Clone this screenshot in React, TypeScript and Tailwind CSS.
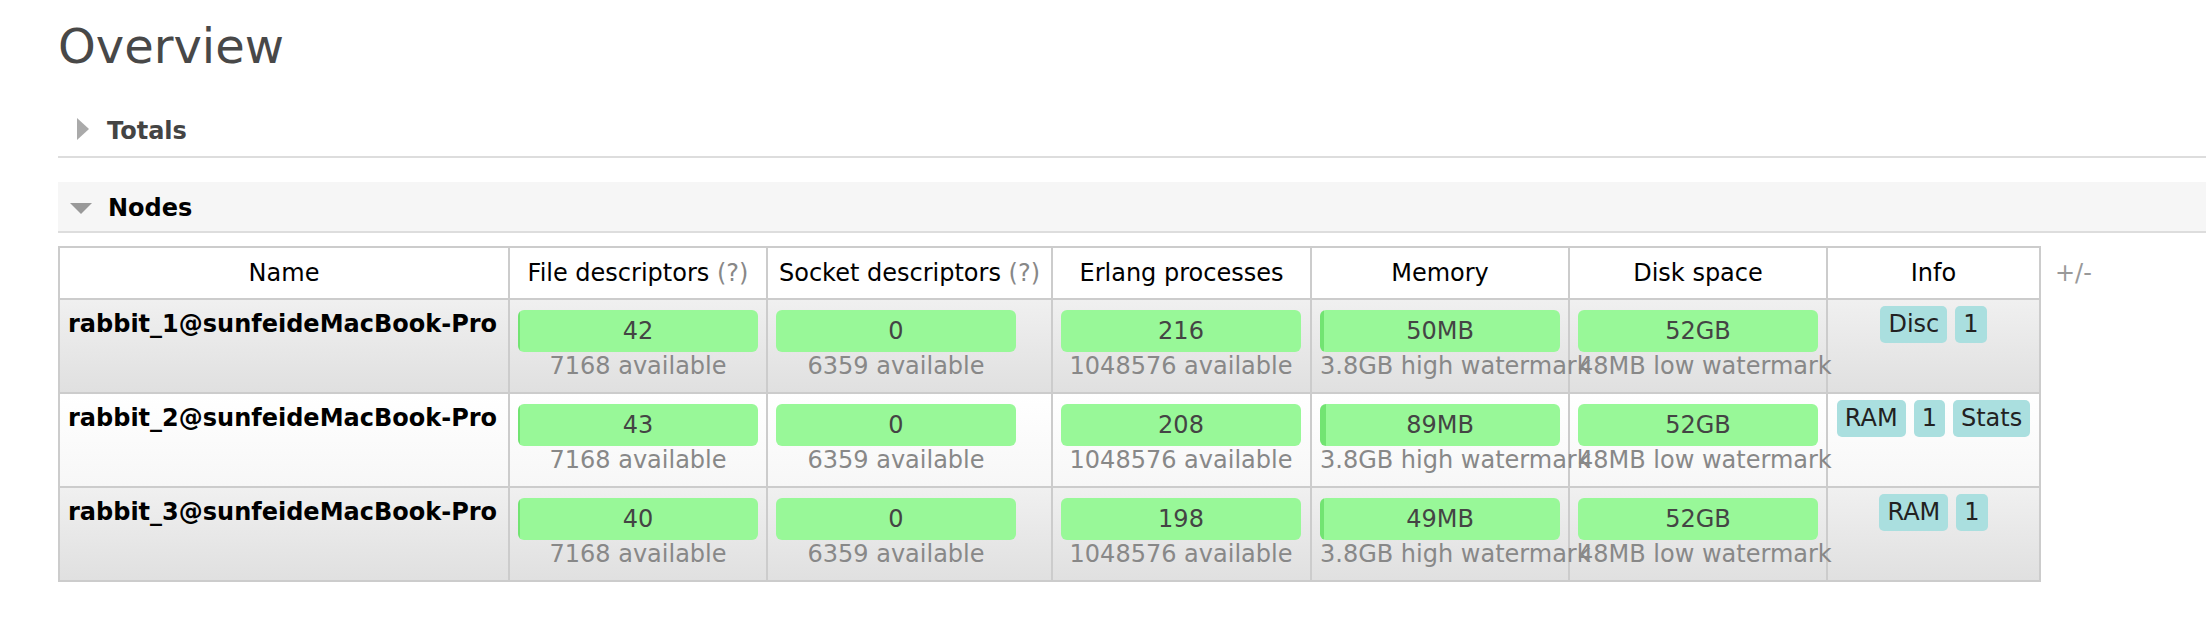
import React from 'react';

type Row = {
  name: string;
  fd: string;
  fdFill: number;
  sock: string;
  erl: string;
  mem: string;
  memFill: number;
  disk: string;
  info: string[];
  alt: 1 | 2;
};

const rows: Row[] = [
  { name: 'rabbit_1@sunfeideMacBook-Pro', fd: '42', fdFill: 2, sock: '0', erl: '216', mem: '50MB', memFill: 4, disk: '52GB', info: ['Disc', '1'], alt: 1 },
  { name: 'rabbit_2@sunfeideMacBook-Pro', fd: '43', fdFill: 2, sock: '0', erl: '208', mem: '89MB', memFill: 6, disk: '52GB', info: ['RAM', '1', 'Stats'], alt: 2 },
  { name: 'rabbit_3@sunfeideMacBook-Pro', fd: '40', fdFill: 2, sock: '0', erl: '198', mem: '49MB', memFill: 4, disk: '52GB', info: ['RAM', '1'], alt: 1 },
];

function Bar({ value, sub, fill }: { value: string; sub: string; fill: number }) {
  const bg =
    fill > 0
      ? `linear-gradient(to right, #72e472 0px, #72e472 ${fill}px, #98f898 ${fill}px, #98f898 100%)`
      : '#98f898';
  return (
    <div className="w-[240px]">
      <div
        className="h-[42px] rounded-[6px] text-center leading-[42px] text-[#444]"
        style={{ background: bg }}
      >
        {value}
      </div>
      <div className="relative text-center leading-[29px] text-[#888] whitespace-nowrap">{sub}</div>
    </div>
  );
}

function Header({ children }: { children: React.ReactNode }) {
  return (
    <div className="h-[52px] border-r-2 border-b-2 border-[#cccccc] bg-white flex items-center justify-center leading-[29px] text-black whitespace-nowrap">
      {children}
    </div>
  );
}

function Cell({ alt, children, className = '' }: { alt: 1 | 2; children: React.ReactNode; className?: string }) {
  const bg = alt === 1 ? 'bg-linear-to-b from-[#f0f0f0] to-[#e0e0e0]' : 'bg-linear-to-b from-[#ffffff] to-[#f7f7f7]';
  return (
    <div className={`h-[94px] border-r-2 border-b-2 border-[#cccccc] ${bg} ${className}`}>{children}</div>
  );
}

export default function App() {
  return (
    <div className="w-[2206px] h-[624px] overflow-hidden bg-white text-[24px] font-['DejaVu_Sans',Verdana,sans-serif]">
      <div className="pl-[58px]">
        <h1 className="pt-[18px] text-[48px] leading-[56px] font-normal text-[#484848]">Overview</h1>

        <div className="mt-[33px] h-[51px] border-b-2 border-[#dddddd] flex items-center">
          <svg width="12" height="22" viewBox="0 0 12 22" className="ml-[19px] mb-[5px] shrink-0">
            <polygon points="0,0 12,11 0,22" fill="#aaaaaa" />
          </svg>
          <span className="ml-[18px] font-bold leading-[29px] text-[#444]">Totals</span>
        </div>

        <div className="mt-[24px] h-[51px] pt-[4px] border-b-2 border-[#dddddd] bg-[#f6f6f6] flex items-center">
          <svg width="22" height="11" viewBox="0 0 22 11" className="ml-[12px] shrink-0">
            <polygon points="0,0 22,0 11,11" fill="#999999" />
          </svg>
          <span className="ml-[16px] font-bold leading-[29px] text-black">Nodes</span>
        </div>

        <div className="mt-[13px] flex items-start">
          <div className="grid grid-cols-[450px_258px_285px_259px_258px_258px_213px] border-l-2 border-t-2 border-[#cccccc]">
            <Header>Name</Header>
            <Header>
              File descriptors&nbsp;<span className="text-[#888]">(?)</span>
            </Header>
            <Header>
              Socket descriptors&nbsp;<span className="text-[#888]">(?)</span>
            </Header>
            <Header>Erlang processes</Header>
            <Header>Memory</Header>
            <Header>Disk space</Header>
            <Header>Info</Header>

            {rows.map((r) => (
              <React.Fragment key={r.name}>
                <Cell alt={r.alt} className="pt-[10px] pl-[8px]">
                  <div className="font-bold leading-[29px] text-black whitespace-nowrap">{r.name}</div>
                </Cell>
                <Cell alt={r.alt} className="pt-[10px] pl-[8px]">
                  <Bar value={r.fd} sub="7168 available" fill={r.fdFill} />
                </Cell>
                <Cell alt={r.alt} className="pt-[10px] pl-[8px]">
                  <Bar value={r.sock} sub="6359 available" fill={0} />
                </Cell>
                <Cell alt={r.alt} className="pt-[10px] pl-[8px]">
                  <Bar value={r.erl} sub="1048576 available" fill={0} />
                </Cell>
                <Cell alt={r.alt} className="pt-[10px] pl-[8px]">
                  <Bar value={r.mem} sub="3.8GB high watermark" fill={r.memFill} />
                </Cell>
                <Cell alt={r.alt} className="pt-[10px] pl-[8px]">
                  <Bar value={r.disk} sub="48MB low watermark" fill={0} />
                </Cell>
                <Cell alt={r.alt} className="pt-[6px] flex justify-center items-start gap-[8px]">
                  {r.info.map((b, i) => (
                    <span
                      key={i}
                      className="px-[8px] py-[4px] leading-[29px] rounded-[5px] bg-[#aadfdf] text-[#222]"
                    >
                      {b}
                    </span>
                  ))}
                </Cell>
              </React.Fragment>
            ))}
          </div>
          <div className="ml-[14px] mt-[13px] leading-[29px] text-[#999]">+/-</div>
        </div>
      </div>
    </div>
  );
}
